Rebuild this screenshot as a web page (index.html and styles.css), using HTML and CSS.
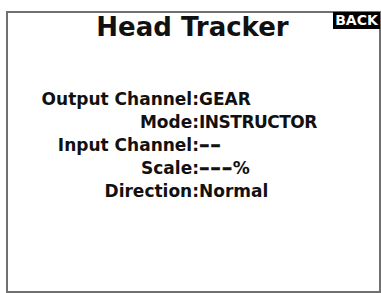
FILE: index.html
```html
<!DOCTYPE html>
<html>
<head>
<meta charset="utf-8">
<link rel="stylesheet" href="styles.css">
</head>
<body>
<div class="screen">
  <div class="frame">
    <div class="back">BACK</div>
    <h1 class="title">Head Tracker</h1>
    <div class="fields">
      <div class="label">Output Channel:</div><div class="value">GEAR</div>
      <div class="label">Mode:</div><div class="value narrow">INSTRUCTOR</div>
      <div class="label">Input Channel:</div><div class="value"><span class="dash dash-2">--</span></div>
      <div class="label">Scale:</div><div class="value"><span class="dash dash-3">---</span>%</div>
      <div class="label">Direction:</div><div class="value">Normal</div>
    </div>
  </div>
</div>
</body>
</html>
```
FILE: styles.css
```css
html, body {
  margin: 0;
  padding: 0;
  background: #ffffff;
}
.screen {
  width: 381px;
  height: 293px;
  padding: 11px 0 0 6px;
  box-sizing: border-box;
  font-family: "DejaVu Sans", sans-serif;
  color: #111111;
}
.frame {
  position: relative;
  width: 375px;
  height: 282px;
  box-sizing: border-box;
  border: 2px solid #707070;
}
.back {
  position: absolute;
  top: -1px;
  right: -1px;
  width: 47px;
  height: 17px;
  background: #000000;
  color: #ffffff;
  font-weight: bold;
  font-size: 14px;
  line-height: 17px;
  text-align: center;
}
.title {
  margin: 0;
  font-size: 26px;
  font-weight: bold;
  line-height: 28px;
  text-align: center;
  padding-right: 2px;
}
.fields {
  margin-top: 47px;
  display: grid;
  grid-template-columns: 191px auto;
  font-size: 17px;
  font-weight: bold;
  line-height: 23px;
}
.label {
  text-align: right;
}
.value {
  text-align: left;
}
.narrow {
  letter-spacing: -0.5px;
}
.dash {
  display: inline-block;
  letter-spacing: 0.5px;
  -webkit-text-stroke: 0.6px #111111;
  transform: scaleX(1.5);
  transform-origin: left center;
}
.dash-2 {
  margin-right: 7px;
}
.dash-3 {
  margin-right: 11px;
}
```
